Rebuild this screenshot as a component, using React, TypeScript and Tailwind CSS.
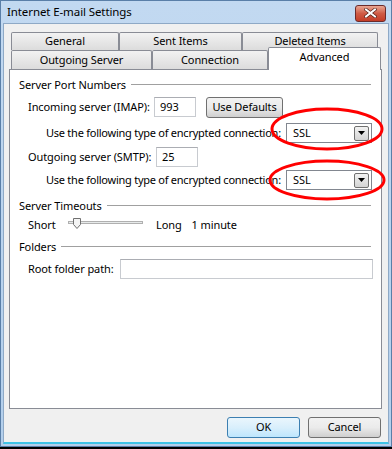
import React from 'react';

const font = { fontFamily: '"Noto Sans", "Open Sans", sans-serif' };

function GroupHeader({ label, className = '' }: { label: string; className?: string }) {
  return (
    <div className={`flex items-center h-[16px] pl-[9px] pr-[8px] ${className}`}>
      <span className="leading-none whitespace-nowrap">{label}</span>
      <div className="flex-1 ml-[5px] h-0 border-t border-[#a0a0a0]" />
    </div>
  );
}

function TextBox({ value = '', className = '' }: { value?: string; className?: string }) {
  return (
    <div className={`h-[20px] shrink-0 bg-white border border-[#c8cbd0] border-t-[#abadb3] flex items-center px-[5px] ${className}`}>
      {value}
    </div>
  );
}

function Select({ value }: { value: string }) {
  return (
    <div className="w-[86px] h-[20px] shrink-0 bg-white border border-[#828790] flex items-center pl-[6px] pr-[2px]">
      <span className="flex-1">{value}</span>
      <div className="w-[15px] h-[15px] border border-[#707070] rounded-[2px] bg-gradient-to-b from-[#f2f2f2] to-[#d4d4d4] flex items-center justify-center">
        <svg width="7" height="4" viewBox="0 0 7 4">
          <path d="M0 0h7L3.5 4z" fill="#000" />
        </svg>
      </div>
    </div>
  );
}

function Tab({ label, className = '' }: { label: string; className?: string }) {
  return (
    <div
      className={`h-[18px] shrink-0 whitespace-nowrap border border-[#898c95] border-b-0 rounded-t-[2px] bg-gradient-to-b from-[#f2f2f2] to-[#dcdcdc] flex items-center justify-center ${className}`}
    >
      {label}
    </div>
  );
}

function Button({ label, isDefault = false, className = '' }: { label: string; isDefault?: boolean; className?: string }) {
  return (
    <div
      className={`h-[21px] shrink-0 whitespace-nowrap rounded-[3px] border flex items-center justify-center bg-gradient-to-b ${
        isDefault
          ? 'border-[#3c7fb1] from-[#eaf6fd] via-[#d9effc] to-[#bee6fd]'
          : 'border-[#707070] from-[#f2f2f2] via-[#ebebeb] to-[#cfcfcf]'
      } ${className}`}
    >
      {label}
    </div>
  );
}

export default function App() {
  return (
    <div className="relative w-[392px] h-[449px] bg-black overflow-hidden text-[11px] tracking-[-0.1px] text-black" style={font}>
      {/* window frame */}
      <div className="h-[447px] border border-[#5a7fa8] bg-gradient-to-b from-[#c2d9f1] to-[#b3cfec] flex flex-col">
        {/* title bar */}
        <div className="h-[22px] flex items-center pl-[6px] pr-[5px] shrink-0">
          <span className="flex-1 text-[11.5px] whitespace-nowrap">Internet E-mail Settings</span>
          <div className="w-[31px] h-[17px] mt-[2px] rounded-[3px] border border-[#6b2b2b] bg-gradient-to-b from-[#e8a593] via-[#cf5b45] to-[#c33c26] flex items-center justify-center">
            <svg width="13" height="10" viewBox="0 0 13 10">
              <path d="M2 1.5L11 8.5M11 1.5L2 8.5" stroke="#4a1a12" strokeWidth="3.4" strokeLinecap="square" />
              <path d="M2 1.5L11 8.5M11 1.5L2 8.5" stroke="#fff" strokeWidth="2" strokeLinecap="square" />
            </svg>
          </div>
        </div>

        {/* client */}
        <div className="flex-1 mx-[2px] mb-[2px] bg-[#f0f0f0] border border-[#8ea9c6] border-b-[#3ec3e6] border-b-2 flex flex-col pl-[5px] pr-[6px] pt-[8px]">
          {/* tabs */}
          <div className="flex h-[18px] pl-[2px]">
            <Tab label="General" className="w-[108px]" />
            <Tab label="Sent Items" className="w-[123px]" />
            <Tab label="Deleted Items" className="w-[136px]" />
          </div>
          <div className="relative flex h-[19px] pl-[2px]">
            <Tab label="Outgoing Server" className="w-[141px] h-[19px]" />
            <Tab label="Connection" className="w-[116px] h-[19px]" />
            <div className="absolute left-[259px] top-[-3px] w-[113px] h-[23px] bg-white border border-[#898c95] border-b-0 rounded-t-[2px] flex justify-center pt-[1px] z-10">
              Advanced
            </div>
          </div>

          {/* panel */}
          <div className="h-[340px] bg-white border border-[#898c95] flex flex-col pt-[6px] pr-[2px]">
            <GroupHeader label="Server Port Numbers" />
            <div className="flex items-center h-[20px] mt-[5px] pl-[18px]">
              <span className="w-[126px] shrink-0 whitespace-nowrap">Incoming server (IMAP):</span>
              <TextBox value="993" className="w-[42px]" />
              <Button label="Use Defaults" className="ml-[10px] w-[77px] h-[20px]" />
            </div>
            <div className="flex items-center h-[20px] mt-[6px] pl-[36px]">
              <span className="w-[240px] shrink-0 whitespace-nowrap tracking-[-0.25px]">Use the following type of encrypted connection:</span>
              <Select value="SSL" />
            </div>
            <div className="flex items-center h-[20px] mt-[4px] pl-[18px]">
              <span className="w-[128px] shrink-0 whitespace-nowrap">Outgoing server (SMTP):</span>
              <TextBox value="25" className="w-[42px]" />
            </div>
            <div className="flex items-center h-[20px] mt-[3px] pl-[36px]">
              <span className="w-[240px] shrink-0 whitespace-nowrap tracking-[-0.25px]">Use the following type of encrypted connection:</span>
              <Select value="SSL" />
            </div>

            <GroupHeader label="Server Timeouts" className="mt-[7px]" />
            <div className="flex items-center h-[20px] mt-[2px] pl-[18px]">
              <span className="w-[40px] shrink-0">Short</span>
              <svg width="76" height="14" viewBox="0 0 76 14" className="mt-[-2px] shrink-0">
                <rect x="0.5" y="4.5" width="74" height="2" fill="#e7eaea" stroke="#b0b0b0" />
                <path d="M5.5 1.5h7v6l-3.5 4l-3.5-4z" fill="#f4f4f4" stroke="#707070" />
              </svg>
              <span className="ml-[12px]">Long</span>
              <span className="ml-[10px] whitespace-nowrap">1 minute</span>
            </div>

            <GroupHeader label="Folders" className="mt-[3px]" />
            <div className="flex items-center h-[20px] mt-[5px] pl-[18px]">
              <span className="w-[92px] shrink-0 whitespace-nowrap">Root folder path:</span>
              <TextBox className="w-[253px]" />
            </div>
          </div>

          {/* buttons */}
          <div className="flex justify-end gap-[8px] mt-[8px] pr-[1px]">
            <Button label="OK" isDefault className="w-[73px]" />
            <Button label="Cancel" className="w-[73px]" />
          </div>
        </div>
      </div>

      {/* red annotation ellipses */}
      <svg className="absolute left-0 top-0 pointer-events-none" width="392" height="449">
        <ellipse cx="327" cy="129" rx="55" ry="20" fill="none" stroke="#ff0000" strokeWidth="3" />
        <ellipse cx="327" cy="180" rx="57" ry="19" fill="none" stroke="#ff0000" strokeWidth="3" />
      </svg>
    </div>
  );
}
